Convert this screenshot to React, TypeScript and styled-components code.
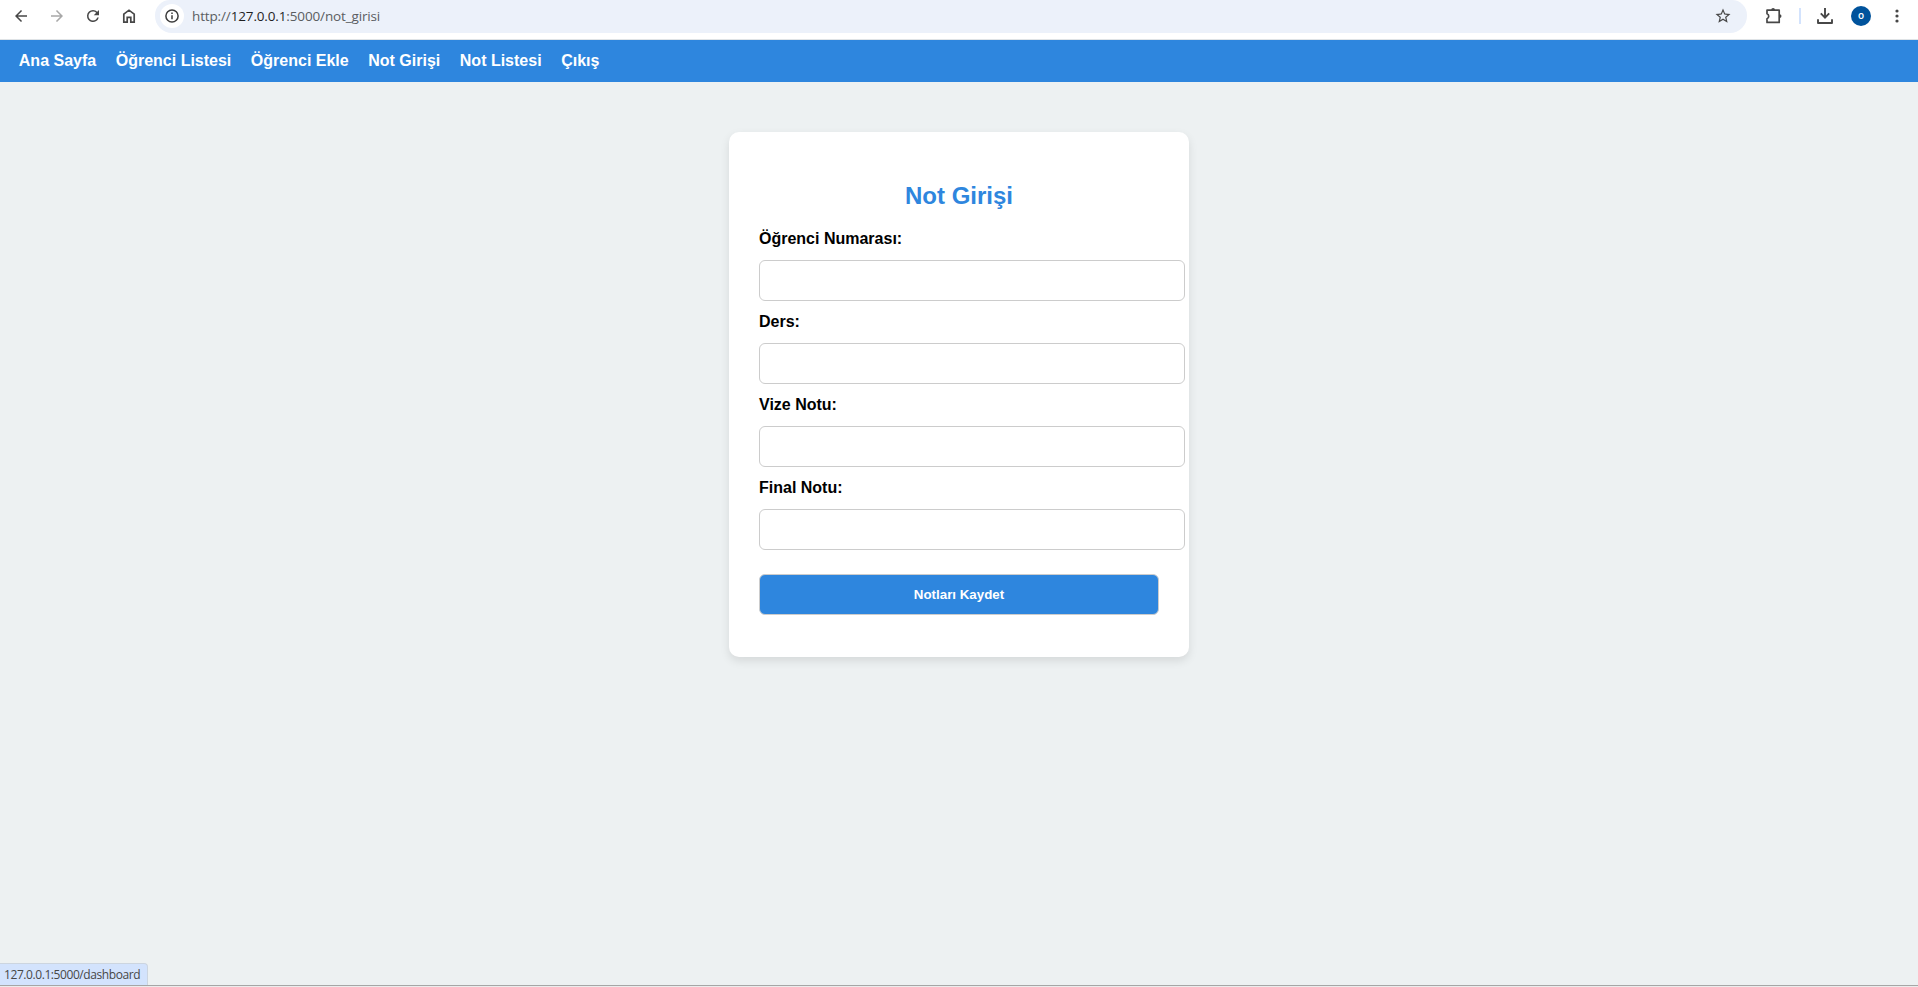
import React from 'react';
import styled, { createGlobalStyle } from 'styled-components';

const BLUE = '#2e86de';
const PAGE = '#edf1f2';

const GlobalStyle = createGlobalStyle`
  html, body { margin: 0; padding: 0; }
  body { background: ${PAGE}; font-family: "Liberation Sans", Arial, sans-serif; font-size: 16px; overflow: hidden; }
`;

const Screen = styled.div`
  display: flex;
  flex-direction: column;
  box-sizing: border-box;
  height: 987px;
  background: ${PAGE};
  border-bottom: 1px solid #ececec;
`;

const Toolbar = styled.header`
  display: flex;
  align-items: flex-start;
  box-sizing: border-box;
  height: 40px;
  background: #fff;
  border-bottom: 1px solid #dfe3e6;
`;

const BarGroup = styled.div<{ $width: number }>`
  display: flex;
  align-items: center;
  flex: none;
  width: ${(p) => p.$width}px;
  height: 32px;
`;

const IconButton = styled.button<{ $width?: number; $muted?: boolean }>`
  display: flex;
  align-items: center;
  justify-content: center;
  flex: none;
  width: ${(p) => p.$width ?? 36}px;
  height: 32px;
  padding: 0;
  border: 0;
  background: none;
  color: ${(p) => (p.$muted ? '#a8a8a8' : '#474747')};
  svg { display: block; }
`;

const AddressBar = styled.div`
  display: flex;
  align-items: center;
  justify-content: space-between;
  flex: 1;
  box-sizing: border-box;
  height: 33px;
  padding: 0 6px 1px 5px;
  background: #ecf1fa;
  border-radius: 15px 15px 17px 17px;
`;

const Address = styled.div`
  display: flex;
  align-items: center;
  gap: 8px;
`;

const SiteInfo = styled.span`
  display: flex;
  align-items: center;
  justify-content: center;
  width: 24px;
  height: 24px;
  border-radius: 50%;
  background: #fff;
  color: #3c3c3c;
`;

const Url = styled.span`
  font: 13.5px/20px "Open Sans", "Noto Sans", sans-serif;
  letter-spacing: -0.14px;
  color: #5a5d61;
  white-space: nowrap;
`;

const Host = styled.span`
  color: #1f1f1f;
`;

const Divider = styled.span`
  flex: none;
  width: 2px;
  height: 16px;
  margin: 0 7px 0 -2px;
  background: #d3e3fd;
`;

const Avatar = styled.span`
  display: flex;
  align-items: center;
  justify-content: center;
  flex: none;
  width: 20px;
  height: 20px;
  margin: 0 9px;
  border-radius: 50%;
  background: #00539c;
  color: #fff;
  font: 600 10px/18px "Open Sans", sans-serif;
  span { margin-top: -2px; }
`;

const Nav = styled.nav`
  display: flex;
  gap: 19.55px;
  padding: 12px 18.8px;
  background: ${BLUE};
`;

const NavLink = styled.a`
  color: #fff;
  font-weight: bold;
  line-height: 18px;
  text-decoration: none;
  white-space: nowrap;
`;

const Main = styled.main`
  display: flex;
  justify-content: center;
  align-items: flex-start;
  flex: 1;
  padding-top: 50px;
`;

const Card = styled.form`
  width: 400px;
  padding: 50px 30px 42px;
  background: #fff;
  border-radius: 10px;
  box-shadow: 0 4px 10px rgba(0, 0, 0, 0.1);
`;

const Title = styled.h2`
  margin: 0 0 20px;
  color: ${BLUE};
  font-size: 24px;
  line-height: 28px;
  text-align: center;
`;

const Field = styled.div`
  margin-bottom: 12px;
`;

const Label = styled.label`
  display: block;
  margin-bottom: 12px;
  font-weight: bold;
  line-height: 18px;
  color: #000;
`;

const Input = styled.input`
  display: block;
  box-sizing: content-box;
  width: 100%;
  height: 15px;
  padding: 12px;
  border: 1px solid #ccc;
  border-radius: 6px;
  background: #fff;
  font: 13.333px "Liberation Sans", Arial, sans-serif;
`;

const Submit = styled.button`
  display: block;
  width: 100%;
  height: 41px;
  margin-top: 24px;
  border: 1px solid #ccc;
  border-radius: 6px;
  background: ${BLUE};
  color: #fff;
  font: bold 13.333px "Liberation Sans", Arial, sans-serif;
`;

const StatusBar = styled.footer`
  border-bottom: 1px solid #a6a6a6;
`;

const StatusText = styled.div`
  box-sizing: border-box;
  width: 148px;
  height: 22px;
  padding-left: 4px;
  border-top: 1px solid #ccd5e0;
  border-right: 1px solid #ccd5e0;
  border-top-right-radius: 4px;
  background: #d3e3fd;
  color: #474747;
  font: 12px/22px "Open Sans", "Noto Sans", sans-serif;
  letter-spacing: -0.42px;
  white-space: nowrap;
`;

const Glyph = ({ size, d }: { size: number; d: string }) => (
  <svg width={size} height={size} viewBox="0 0 24 24" fill="currentColor">
    <path d={d} />
  </svg>
);

const BACK = 'M20 11H7.83l5.59-5.59L12 4l-8 8 8 8 1.41-1.41L7.83 13H20v-2z';
const FORWARD = 'M12 4l-1.41 1.41L16.17 11H4v2h12.17l-5.58 5.59L12 20l8-8z';
const RELOAD =
  'M17.65 6.35A7.958 7.958 0 0 0 12 4a8 8 0 1 0 7.73 10h-2.08A5.99 5.99 0 0 1 12 18a6 6 0 1 1 0-12c1.66 0 3.14.69 4.22 1.78L13 11h7V4l-2.35 2.35z';
const STAR =
  'M22 9.24l-7.19-.62L12 2 9.19 8.63 2 9.24l5.46 4.73L5.82 21 12 17.27 18.18 21l-1.63-7.03L22 9.24zM12 15.4l-3.76 2.27 1-4.28-3.32-2.88 4.38-.38L12 6.1l1.71 4.04 4.38.38-3.32 2.88 1 4.28L12 15.4z';

const links = ['Ana Sayfa', 'Öğrenci Listesi', 'Öğrenci Ekle', 'Not Girişi', 'Not Listesi', 'Çıkış'];
const fields = ['Öğrenci Numarası:', 'Ders:', 'Vize Notu:', 'Final Notu:'];

export default function App() {
  return (
    <Screen>
      <GlobalStyle />
      <Toolbar>
        <BarGroup $width={155}>
          <IconButton $width={42}><Glyph size={18} d={BACK} /></IconButton>
          <IconButton $width={30} $muted><Glyph size={18} d={FORWARD} /></IconButton>
          <IconButton $width={42}><Glyph size={18} d={RELOAD} /></IconButton>
          <IconButton $width={30}>
            <svg width="18" height="18" viewBox="0 0 18 18" fill="none" stroke="currentColor" strokeWidth="1.7">
              <path d="M3.8 15.2V7.2L9 3.2l5.2 4v8h-3.4v-4.8H7.2v4.8z" />
            </svg>
          </IconButton>
        </BarGroup>
        <AddressBar>
          <Address>
            <SiteInfo>
              <svg width="16" height="16" viewBox="0 0 16 16" fill="none" stroke="currentColor" strokeWidth="1.5">
                <circle cx="8" cy="8" r="6.1" />
                <path d="M8 7.2v4M8 4.6v1.5" />
              </svg>
            </SiteInfo>
            <Url>http://<Host>127.0.0.1</Host>:5000/not_girisi</Url>
          </Address>
          <IconButton><Glyph size={18} d={STAR} /></IconButton>
        </AddressBar>
        <BarGroup $width={171}>
          <IconButton $width={54}>
            <svg width="20" height="20" viewBox="0 0 20 20" fill="none" stroke="currentColor" strokeWidth="1.7" strokeLinejoin="round">
              <path d="M3 4.2h12.2v12.2H3v-3.7a2.6 2.6 0 0 0 0-4.9z" />
              <path d="M7.2 3.9a1.9 1.9 0 0 1 3.8 0zM15.6 8.2a1.9 1.9 0 0 1 0 3.8z" fill="currentColor" stroke="none" />
            </svg>
          </IconButton>
          <Divider />
          <IconButton $width={34}>
            <svg width="18" height="18" viewBox="0 0 18 18" fill="none" stroke="currentColor" strokeWidth="1.9" strokeLinejoin="round">
              <path d="M9 1v9.4" />
              <path d="M4.8 6.4L9 10.6l4.2-4.2" strokeLinejoin="miter" />
              <path d="M2 12.2V16h14v-3.8" />
            </svg>
          </IconButton>
          <Avatar><span>o</span></Avatar>
          <IconButton $width={34}>
            <svg width="4" height="16" viewBox="0 0 4 16" fill="currentColor">
              <circle cx="2" cy="3" r="1.6" />
              <circle cx="2" cy="8" r="1.6" />
              <circle cx="2" cy="13" r="1.6" />
            </svg>
          </IconButton>
        </BarGroup>
      </Toolbar>
      <Nav>
        {links.map((text) => <NavLink key={text}>{text}</NavLink>)}
      </Nav>
      <Main>
        <Card>
          <Title>Not Girişi</Title>
          {fields.map((text) => (
            <Field key={text}>
              <Label>{text}</Label>
              <Input />
            </Field>
          ))}
          <Submit type="button">Notları Kaydet</Submit>
        </Card>
      </Main>
      <StatusBar>
        <StatusText>127.0.0.1:5000/dashboard</StatusText>
      </StatusBar>
    </Screen>
  );
}
